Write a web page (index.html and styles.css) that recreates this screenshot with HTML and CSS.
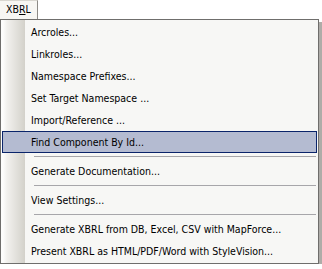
FILE: index.html
```html
<!DOCTYPE html>
<html lang="en">
<head>
    <meta charset="UTF-8">
    <title>XBRL menu</title>
    <link rel="stylesheet" href="styles.css">
</head>
<body>
    <div class="menubar">
        <div class="menu-title">XB<u>R</u>L</div>
    </div>
    <div class="menu">
        <div class="item">Arcroles...</div>
        <div class="item">Linkroles...</div>
        <div class="item">Namespace Prefixes...</div>
        <div class="item">Set Target Namespace ...</div>
        <div class="item">Import/Reference ...</div>
        <div class="item active">Find Component By Id...</div>
        <div class="sep"></div>
        <div class="item">Generate Documentation...</div>
        <div class="sep"></div>
        <div class="item">View Settings...</div>
        <div class="sep"></div>
        <div class="item">Generate XBRL from DB, Excel, CSV with MapForce...</div>
        <div class="item">Present XBRL as HTML/PDF/Word with StyleVision...</div>
    </div>
</body>
</html>
```

FILE: styles.css
```css
body {
    margin: 0;
    background-color: #ffffff;
    font-family: "DejaVu Sans Condensed", "DejaVu Sans", sans-serif;
    font-stretch: condensed;
    font-size: 10.5px;
    color: #000000;
}
.menubar {
    display: flex;
    height: 19px;
}
.menu-title {
    background-color: #f7f6f3;
    border-right: 1px solid #8c8a86;
    border-top: 1px solid #d8d6d0;
    padding: 2px 6px 0 6px;
    width: 25px;
    color: #000000;
}
.menu {
    width: 317px;
    border: 1px solid #6f6e6c;
    background: linear-gradient(to right, #fdfdfc 2px, #f2f1ee 6px, #d3d1ca 24px, #f7f7f5 24px);
    padding: 1px 0 1px 0;
    box-shadow: 3px 3px 0 #aeaca8;
}
.item {
    height: 20px;
    line-height: 20px;
    padding-left: 28px;
    margin: 0 1px;
    border: 1px solid transparent;
    white-space: nowrap;
}
.item.active {
    background-color: #b4bbd1;
    border-color: #0a246a;
}
.sep {
    height: 1px;
    margin: 3px 2px 3px 33px;
    background-color: #a7a6aa;
}
```
